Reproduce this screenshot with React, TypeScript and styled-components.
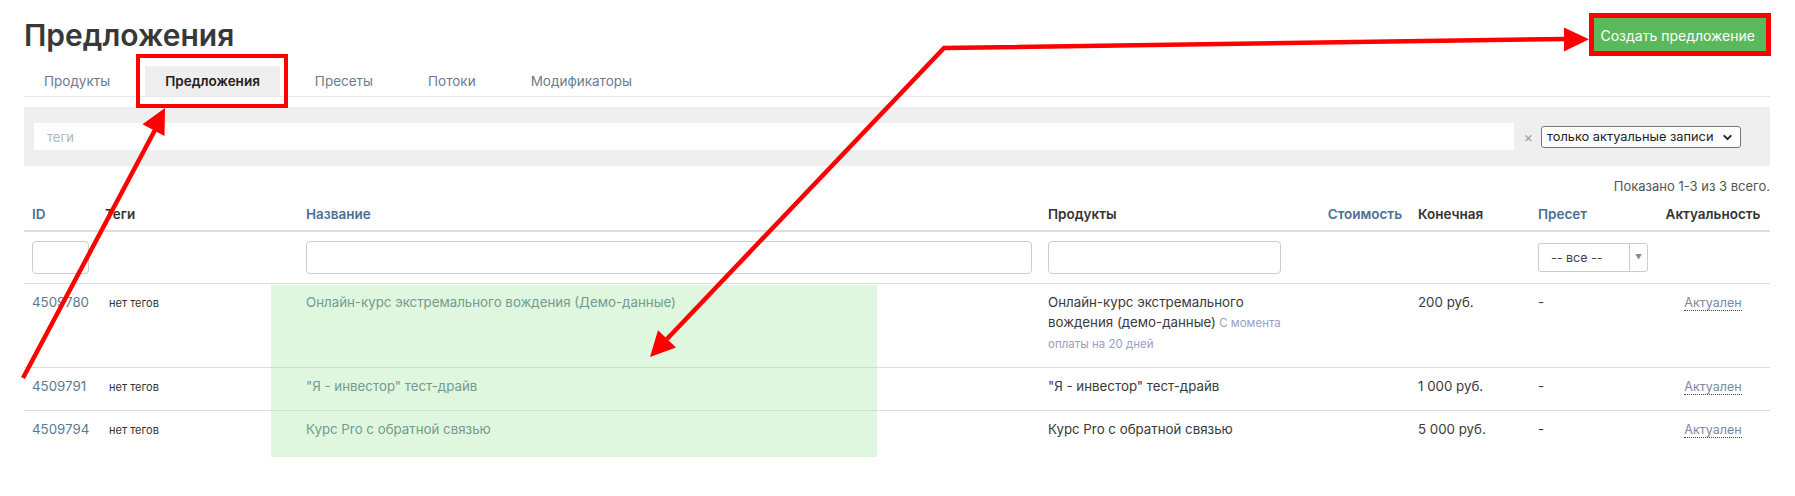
import React from "react";
import styled, { createGlobalStyle } from "styled-components";
import { ChevronDown } from "lucide-react";

const GlobalStyle = createGlobalStyle`
  body {
    margin: 0;
    background: #fff;
    color: #333;
    font-family: Inter, "Noto Sans", "Liberation Sans", sans-serif;
  }
`;

interface Offer {
  id: string;
  name: string;
  product: string;
  productNote?: string;
  price: string;
}

const offers: Offer[] = [
  {
    id: "4509780",
    name: "Онлайн-курс экстремального вождения (Демо-данные)",
    product: "Онлайн-курс экстремального вождения (демо-данные)",
    productNote: "С момента оплаты на 20 дней",
    price: "200 руб."
  },
  {
    id: "4509791",
    name: "\"Я - инвестор\" тест-драйв",
    product: "\"Я - инвестор\" тест-драйв",
    price: "1 000 руб."
  },
  {
    id: "4509794",
    name: "Курс Pro с обратной связью",
    product: "Курс Pro с обратной связью",
    price: "5 000 руб."
  }
];

const tabs = ["Продукты", "Предложения", "Пресеты", "Потоки", "Модификаторы"];

/**
 * Offers list page with the red annotation marks drawn over it.
 */
const App: React.FC = () => (
  <>
    <GlobalStyle />
    <Page>
      <TopBar>
        <Title>Предложения</Title>
        <CreateButton>Создать предложение</CreateButton>
      </TopBar>

      <Tabs>
        {tabs.map(tab => (
          <Tab key={tab} active={tab === "Предложения"}>
            {tab}
          </Tab>
        ))}
      </Tabs>

      <FilterPanel>
        <TagsInput placeholder="теги" />
        <ClearMark>×</ClearMark>
        <SelectWrap>
          <StatusSelect defaultValue="actual">
            <option value="actual">только актуальные записи</option>
          </StatusSelect>
          <ChevronDown size={13} strokeWidth={3.5} />
        </SelectWrap>
      </FilterPanel>

      <Summary>Показано 1-3 из 3 всего.</Summary>

      <Table>
        <colgroup>
          <col style={{ width: 73 }} />
          <col style={{ width: 201 }} />
          <col style={{ width: 742 }} />
          <col style={{ width: 249 }} />
          <col style={{ width: 121 }} />
          <col style={{ width: 120 }} />
          <col style={{ width: 126 }} />
          <col style={{ width: 114 }} />
        </colgroup>
        <thead>
          <tr>
            <Th link>ID</Th>
            <Th>Теги</Th>
            <Th link>Название</Th>
            <Th>Продукты</Th>
            <Th link align="right">Стоимость</Th>
            <Th>Конечная</Th>
            <Th link>Пресет</Th>
            <Th align="center">Актуальность</Th>
          </tr>
          <FilterRow>
            <td>
              <FilterInput />
            </td>
            <td />
            <td>
              <FilterInput />
            </td>
            <td>
              <FilterInput />
            </td>
            <td />
            <td />
            <td>
              <PresetSelect>
                <PresetValue>-- все --</PresetValue>
                <PresetArrow>▼</PresetArrow>
              </PresetSelect>
            </td>
            <td />
          </FilterRow>
        </thead>
        <tbody>
          {offers.map(offer => (
            <Row key={offer.id}>
              <Td>
                <IdLink>{offer.id}</IdLink>
              </Td>
              <Td>
                <NoTags>нет тегов</NoTags>
              </Td>
              <Td>
                <NameLink>{offer.name}</NameLink>
              </Td>
              <Td>
                {offer.product}
                {offer.productNote && <Note> {offer.productNote}</Note>}
              </Td>
              <Td />
              <Td>{offer.price}</Td>
              <Td>-</Td>
              <Td align="center">
                <Status>Актуален</Status>
              </Td>
            </Row>
          ))}
        </tbody>
      </Table>

      <Marks viewBox="0 0 1795 496">
        <rect x="271" y="285" width="606" height="172" fill="rgba(160, 232, 160, 0.35)" />
        <rect x="138" y="56" width="148" height="50" fill="none" stroke="#ff0000" strokeWidth="4" />
        <rect x="1591.5" y="15.5" width="177" height="38" fill="none" stroke="#ff0000" strokeWidth="5" />
        <line x1="23" y1="378" x2="155" y2="130" stroke="#ff0000" strokeWidth="4.5" />
        <polygon points="165,108 142.5,124.3 164.5,135.9" fill="#ff0000" />
        <polyline
          points="667,339 944,48 1566,39"
          fill="none"
          stroke="#ff0000"
          strokeWidth="4.5"
          strokeLinejoin="miter"
        />
        <polygon points="650,357 676,347.5 658,330.3" fill="#ff0000" />
        <polygon points="1589,39.3 1564,27.5 1564,51.5" fill="#ff0000" />
      </Marks>
    </Page>
  </>
);

const Page = styled.div`
  position: relative;
  box-sizing: border-box;
  width: 1795px;
  height: 496px;
  padding: 0 25px 0 24px;
  overflow: hidden;
`;

const TopBar = styled.div`
  display: flex;
  justify-content: space-between;
  align-items: center;
  padding-top: 17px;
`;

const Title = styled.h1`
  margin: 0;
  font-size: 30px;
  line-height: 36px;
  font-weight: 600;
  color: #383838;
`;

const CreateButton = styled.button`
  height: 34px;
  margin-right: 3px;
  padding: 0 12px;
  border: none;
  border-radius: 0;
  background: #5cb85c;
  color: #fff;
  font-family: inherit;
  font-size: 14px;
`;

const Tabs = styled.div`
  display: flex;
  gap: 15px;
  margin-top: 13px;
  height: 30px;
  border-bottom: 1px solid #e6e6e6;
`;

const Tab = styled.div<{ active?: boolean }>`
  display: flex;
  align-items: center;
  padding: 0 20px;
  font-size: 13.5px;
  color: ${p => (p.active ? "#222" : "#6a7b93")};
  font-weight: ${p => (p.active ? 600 : 400)};
  background: ${p => (p.active ? "#eeeeee" : "transparent")};
`;

const FilterPanel = styled.div`
  display: flex;
  align-items: center;
  margin-top: 10px;
  height: 59px;
  padding: 0 29px 0 10px;
  background: #efefef;
  box-sizing: border-box;
`;

const TagsInput = styled.input`
  flex: 1;
  height: 27px;
  padding: 0 13px;
  border: none;
  background: #fff;
  font-family: inherit;
  font-size: 13px;
  outline: none;
  &::placeholder {
    color: #b5b5b5;
  }
`;

const ClearMark = styled.span`
  margin: 0 8px 0 10px;
  color: #999;
  font-size: 14px;
`;

const SelectWrap = styled.div`
  position: relative;
  display: flex;
  align-items: center;
  width: 200px;
  height: 22px;
  svg {
    position: absolute;
    right: 7px;
    top: 5px;
    color: #222;
    pointer-events: none;
  }
`;

const StatusSelect = styled.select`
  appearance: none;
  width: 100%;
  height: 100%;
  padding: 0 0 0 5px;
  border: 1px solid #767676;
  border-radius: 3px;
  background: #fff;
  color: #222;
  font-family: inherit;
  font-size: 12.8px;
`;

const Summary = styled.div`
  margin-top: 10px;
  text-align: right;
  font-size: 13px;
  line-height: 20px;
  color: #555;
`;

const Table = styled.table`
  width: 1746px;
  border-collapse: collapse;
  table-layout: fixed;
  font-size: 13.3px;
  line-height: 20px;
`;

const Th = styled.th<{ link?: boolean; align?: string }>`
  padding: 8px 8px 6px;
  text-align: ${p => p.align || "left"};
  font-size: 13.5px;
  font-weight: 600;
  color: ${p => (p.link ? "#4a7096" : "#333")};
  border-bottom: 2px solid #dddddd;
`;

const FilterRow = styled.tr`
  td {
    padding: 9px 8px;
  }
`;

const FilterInput = styled.input`
  box-sizing: border-box;
  width: 100%;
  height: 33px;
  border: 1px solid #cccccc;
  border-radius: 4px;
  background: #fff;
`;

const PresetSelect = styled.div`
  display: flex;
  box-sizing: border-box;
  width: 110px;
  height: 29px;
  border: 1px solid #cccccc;
  border-radius: 3px;
  background: #fff;
`;

const PresetValue = styled.span`
  flex: 1;
  display: flex;
  align-items: center;
  padding-left: 12px;
  font-size: 12.5px;
  color: #444;
`;

const PresetArrow = styled.span`
  display: flex;
  align-items: center;
  justify-content: center;
  width: 17px;
  border-left: 1px solid #cccccc;
  font-size: 7px;
  color: #888;
`;

const Row = styled.tr`
  border-top: 1px solid #dddddd;
`;

const Td = styled.td<{ align?: string }>`
  padding: 8px 8px 13px;
  vertical-align: top;
  text-align: ${p => p.align || "left"};
  color: #3a3a3a;
`;

const IdLink = styled.span`
  color: #5d7897;
`;

const NoTags = styled.span`
  padding-left: 4px;
  font-size: 11px;
  color: #333;
`;

const NameLink = styled.span`
  color: #5b7088;
`;

const Note = styled.span`
  font-size: 11.5px;
  color: #9b9fc6;
`;

const Status = styled.span`
  font-size: 12.5px;
  color: #7c89a0;
  border-bottom: 1px dotted #444;
`;

const Marks = styled.svg`
  position: absolute;
  top: 0;
  left: 0;
  width: 1795px;
  height: 496px;
  pointer-events: none;
`;

export default App;
